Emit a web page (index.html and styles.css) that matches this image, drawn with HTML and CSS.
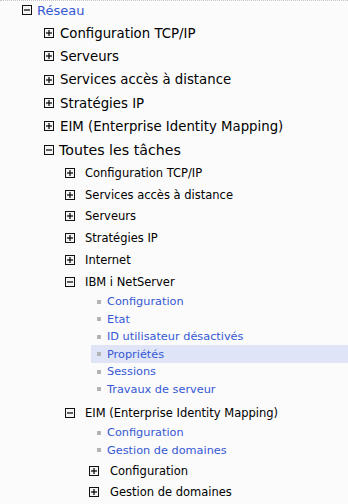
FILE: index.html
```html
<!DOCTYPE html>
<html lang="fr">
<head>
<meta charset="utf-8">
<link rel="stylesheet" href="styles.css">
</head>
<body>
<div class="tree">
  <div class="row root">
    <svg class="ico" viewBox="0 0 10 10"><rect x="0.5" y="0.5" width="9" height="9"/><line x1="2" y1="5" x2="8" y2="5"/></svg>
    <span class="lbl link">Réseau</span>
  </div>
  <div class="l1-group">
    <div class="row l1"><svg class="ico" viewBox="0 0 10 10"><rect x="0.5" y="0.5" width="9" height="9"/><line x1="2" y1="5" x2="8" y2="5"/><line x1="5" y1="2" x2="5" y2="8"/></svg><span class="lbl">Configuration TCP/IP</span></div>
    <div class="row l1"><svg class="ico" viewBox="0 0 10 10"><rect x="0.5" y="0.5" width="9" height="9"/><line x1="2" y1="5" x2="8" y2="5"/><line x1="5" y1="2" x2="5" y2="8"/></svg><span class="lbl">Serveurs</span></div>
    <div class="row l1"><svg class="ico" viewBox="0 0 10 10"><rect x="0.5" y="0.5" width="9" height="9"/><line x1="2" y1="5" x2="8" y2="5"/><line x1="5" y1="2" x2="5" y2="8"/></svg><span class="lbl">Services accès à distance</span></div>
    <div class="row l1"><svg class="ico" viewBox="0 0 10 10"><rect x="0.5" y="0.5" width="9" height="9"/><line x1="2" y1="5" x2="8" y2="5"/><line x1="5" y1="2" x2="5" y2="8"/></svg><span class="lbl">Stratégies IP</span></div>
    <div class="row l1"><svg class="ico" viewBox="0 0 10 10"><rect x="0.5" y="0.5" width="9" height="9"/><line x1="2" y1="5" x2="8" y2="5"/><line x1="5" y1="2" x2="5" y2="8"/></svg><span class="lbl">EIM (Enterprise Identity Mapping)</span></div>
    <div class="row l1 big"><svg class="ico" viewBox="0 0 10 10"><rect x="0.5" y="0.5" width="9" height="9"/><line x1="2" y1="5" x2="8" y2="5"/></svg><span class="lbl">Toutes les tâches</span></div>
  </div>
  <div class="l2-group">
    <div class="row l2"><svg class="ico" viewBox="0 0 10 10"><rect x="0.5" y="0.5" width="9" height="9"/><line x1="2" y1="5" x2="8" y2="5"/><line x1="5" y1="2" x2="5" y2="8"/></svg><span class="lbl">Configuration TCP/IP</span></div>
    <div class="row l2"><svg class="ico" viewBox="0 0 10 10"><rect x="0.5" y="0.5" width="9" height="9"/><line x1="2" y1="5" x2="8" y2="5"/><line x1="5" y1="2" x2="5" y2="8"/></svg><span class="lbl">Services accès à distance</span></div>
    <div class="row l2"><svg class="ico" viewBox="0 0 10 10"><rect x="0.5" y="0.5" width="9" height="9"/><line x1="2" y1="5" x2="8" y2="5"/><line x1="5" y1="2" x2="5" y2="8"/></svg><span class="lbl">Serveurs</span></div>
    <div class="row l2"><svg class="ico" viewBox="0 0 10 10"><rect x="0.5" y="0.5" width="9" height="9"/><line x1="2" y1="5" x2="8" y2="5"/><line x1="5" y1="2" x2="5" y2="8"/></svg><span class="lbl">Stratégies IP</span></div>
    <div class="row l2"><svg class="ico" viewBox="0 0 10 10"><rect x="0.5" y="0.5" width="9" height="9"/><line x1="2" y1="5" x2="8" y2="5"/><line x1="5" y1="2" x2="5" y2="8"/></svg><span class="lbl">Internet</span></div>
    <div class="row l2"><svg class="ico" viewBox="0 0 10 10"><rect x="0.5" y="0.5" width="9" height="9"/><line x1="2" y1="5" x2="8" y2="5"/></svg><span class="lbl">IBM i NetServer</span></div>
    <div class="links">
      <div class="row task"><span class="dot"></span><span class="lbl link">Configuration</span></div>
      <div class="row task"><span class="dot"></span><span class="lbl link">Etat</span></div>
      <div class="row task"><span class="dot"></span><span class="lbl link">ID utilisateur désactivés</span></div>
      <div class="row task hover"><span class="dot"></span><span class="lbl link">Propriétés</span></div>
      <div class="row task"><span class="dot"></span><span class="lbl link">Sessions</span></div>
      <div class="row task"><span class="dot"></span><span class="lbl link">Travaux de serveur</span></div>
    </div>
    <div class="row l2 eim"><svg class="ico" viewBox="0 0 10 10"><rect x="0.5" y="0.5" width="9" height="9"/><line x1="2" y1="5" x2="8" y2="5"/></svg><span class="lbl">EIM (Enterprise Identity Mapping)</span></div>
    <div class="links">
      <div class="row task"><span class="dot"></span><span class="lbl link">Configuration</span></div>
      <div class="row task"><span class="dot"></span><span class="lbl link">Gestion de domaines</span></div>
    </div>
    <div class="l3-group">
      <div class="row l3"><svg class="ico" viewBox="0 0 10 10"><rect x="0.5" y="0.5" width="9" height="9"/><line x1="2" y1="5" x2="8" y2="5"/><line x1="5" y1="2" x2="5" y2="8"/></svg><span class="lbl">Configuration</span></div>
      <div class="row l3"><svg class="ico" viewBox="0 0 10 10"><rect x="0.5" y="0.5" width="9" height="9"/><line x1="2" y1="5" x2="8" y2="5"/><line x1="5" y1="2" x2="5" y2="8"/></svg><span class="lbl">Gestion de domaines</span></div>
    </div>
  </div>
</div>
</body>
</html>
```

FILE: styles.css
```css
html, body {
  margin: 0;
  padding: 0;
  background: #fbfbfb;
}
body {
  width: 348px;
  height: 504px;
  overflow: hidden;
  font-family: "DejaVu Sans", Verdana, sans-serif;
  color: #000;
}
.tree {
  border-top: 1px dotted #c4c4c4;
  display: flex;
  flex-direction: column;
}
.row {
  display: flex;
  align-items: center;
  white-space: nowrap;
}
.ico {
  width: 10px;
  height: 10px;
  flex: none;
}
.ico rect {
  fill: #f4f4f4;
  stroke: #111;
  stroke-width: 1;
}
.ico line {
  stroke: #000;
  stroke-width: 1.2;
}
.link {
  color: #3558d4;
}
.root {
  height: 18px;
  padding-left: 22px;
  font-size: 13px;
}
.root .lbl { margin-left: 5px; }
.l1-group {
  margin-top: 2.5px;
  display: flex;
  flex-direction: column;
}
.l1 {
  height: 23.3px;
  padding-left: 44px;
  font-size: 13.3px;
}
.l1 .lbl { margin-left: 6px; }
.l1.big {
  height: 24px;
  font-size: 14.2px;
}
.l1.big .lbl { margin-left: 5px; }
.l2-group {
  display: flex;
  flex-direction: column;
}
.l2 {
  height: 21.8px;
  padding-left: 65px;
  font-size: 11.5px;
}
.l2 .lbl { margin-left: 10px; }
.l2.eim {
  margin-top: 4px;
  height: 22px;
}
.links {
  display: flex;
  flex-direction: column;
}
.task {
  height: 17.5px;
  margin-left: 91px;
  padding-left: 6px;
  font-size: 11.3px;
}
.task.hover {
  background: #dfe5f7;
}
.dot {
  width: 4px;
  height: 4px;
  background: #b4b4b4;
  flex: none;
}
.task .lbl { margin-left: 6px; }
.l3-group {
  margin-top: 1.5px;
  display: flex;
  flex-direction: column;
}
.l3 {
  height: 21px;
  padding-left: 89px;
  font-size: 11.5px;
}
.l3 .lbl { margin-left: 11px; }
```
